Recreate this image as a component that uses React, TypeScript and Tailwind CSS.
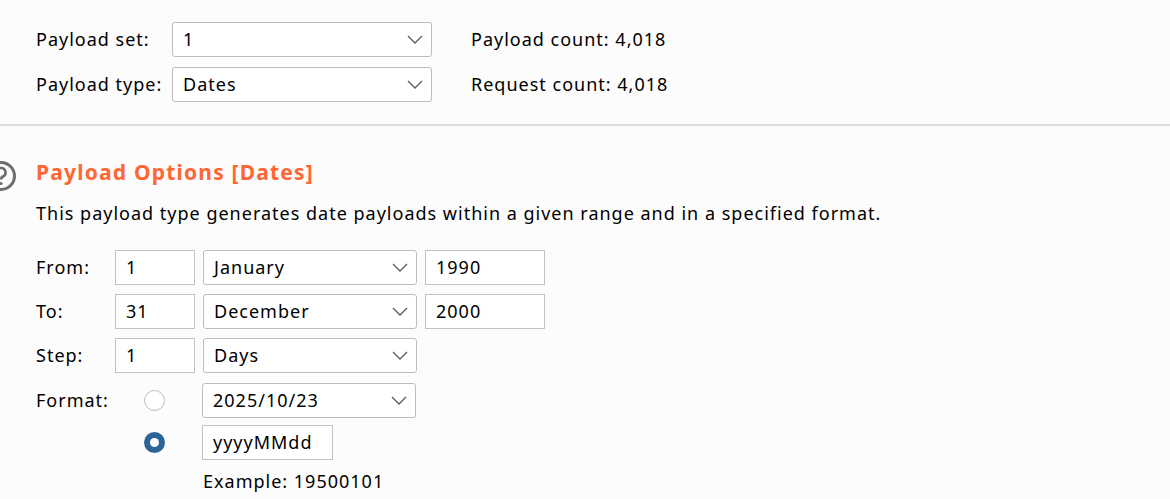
import { ReactNode } from "react";

const font = { fontFamily: '"Noto Sans", "Open Sans", sans-serif' };

function Chevron() {
  return (
    <svg width="16" height="9" viewBox="0 0 16 9" className="shrink-0">
      <path d="M1 1l7 7 7-7" fill="none" stroke="#5a5a5a" strokeWidth="1.3" />
    </svg>
  );
}

function Select({ value, w }: { value: string; w: string }) {
  return (
    <div
      className={`${w} h-[35px] shrink-0 flex items-center justify-between pl-[10px] pr-[8px] bg-white border border-[#bdbdbd] rounded-[3px]`}
    >
      <span>{value}</span>
      <Chevron />
    </div>
  );
}

function Field({ value, w }: { value: string; w: string }) {
  return (
    <div
      className={`${w} h-[35px] shrink-0 flex items-center px-[10px] bg-white border border-[#c2c2c2]`}
    >
      {value}
    </div>
  );
}

function Row({ label, children }: { label: string; children: ReactNode }) {
  return (
    <div className="flex items-center gap-[8px]">
      <div className="w-[71px] shrink-0">{label}</div>
      {children}
    </div>
  );
}

function Radio({ checked }: { checked?: boolean }) {
  return (
    <div className="w-[79px] shrink-0 flex justify-center">
      {checked ? (
        <div className="w-[21px] h-[21px] rounded-full bg-[#2b6497] flex items-center justify-center">
          <div className="w-[9px] h-[9px] rounded-full bg-white" />
        </div>
      ) : (
        <div className="w-[21px] h-[21px] rounded-full bg-white border border-[#bcbcbc]" />
      )}
    </div>
  );
}

export default function App() {
  return (
    <div
      className="w-[1170px] h-[499px] overflow-hidden bg-[#fcfcfc] text-black text-[18px] tracking-[1px] relative"
      style={font}
    >
      {/* top */}
      <div className="pt-[22px] pb-[22px] pl-[36px] flex border-b-2 border-[#dedede]">
        <div className="flex flex-col gap-[10px]">
          <div className="flex items-center">
            <div className="w-[136px]">Payload set:</div>
            <Select value="1" w="w-[260px]" />
          </div>
          <div className="flex items-center">
            <div className="w-[136px]">Payload type:</div>
            <Select value="Dates" w="w-[260px]" />
          </div>
        </div>
        <div className="ml-[39px] flex flex-col gap-[10px]">
          <div className="h-[35px] flex items-center">Payload count: 4,018</div>
          <div className="h-[35px] flex items-center">Request count: 4,018</div>
        </div>
      </div>

      {/* options */}
      <div className="relative pl-[36px] pt-[32px]">
        <svg
          width="32"
          height="32"
          viewBox="0 0 32 32"
          className="absolute left-[-15px] top-[34px]"
        >
          <circle cx="16" cy="16" r="13.5" fill="none" stroke="#6e6e6e" strokeWidth="3" />
          <path
            d="M11.5 12.5a4.5 4.5 0 1 1 6.5 4c-1.5.8-2 1.6-2 3"
            fill="none"
            stroke="#6e6e6e"
            strokeWidth="2.6"
          />
          <circle cx="16" cy="23.5" r="1.6" fill="#6e6e6e" />
        </svg>
        <div className="text-[21px] font-bold text-[#ff6633] leading-[28px] tracking-[1.2px]">
          Payload Options [Dates]
        </div>
        <div className="mt-[14px] leading-[26px]">
          This payload type generates date payloads within a given range and in a specified format.
        </div>
        <div className="mt-[24px] flex flex-col gap-[9px]">
          <Row label="From:">
            <Field value="1" w="w-[80px]" />
            <Select value="January" w="w-[214px]" />
            <Field value="1990" w="w-[120px]" />
          </Row>
          <Row label="To:">
            <Field value="31" w="w-[80px]" />
            <Select value="December" w="w-[214px]" />
            <Field value="2000" w="w-[120px]" />
          </Row>
          <Row label="Step:">
            <Field value="1" w="w-[80px]" />
            <Select value="Days" w="w-[214px]" />
          </Row>
          <div className="flex items-center gap-[8px] mt-[1px]">
            <div className="w-[71px] shrink-0">Format:</div>
            <Radio />
            <Select value="2025/10/23" w="w-[214px]" />
          </div>
          <div className="flex items-center gap-[8px] -mt-[2px]">
            <div className="w-[71px] shrink-0" />
            <Radio checked />
            <Field value="yyyyMMdd" w="w-[131px]" />
          </div>
          <div className="flex items-center gap-[8px] -mt-[1px]">
            <div className="w-[71px] shrink-0" />
            <div className="w-[79px] shrink-0" />
            <div className="pl-[1px]">Example: 19500101</div>
          </div>
        </div>
      </div>
    </div>
  );
}
